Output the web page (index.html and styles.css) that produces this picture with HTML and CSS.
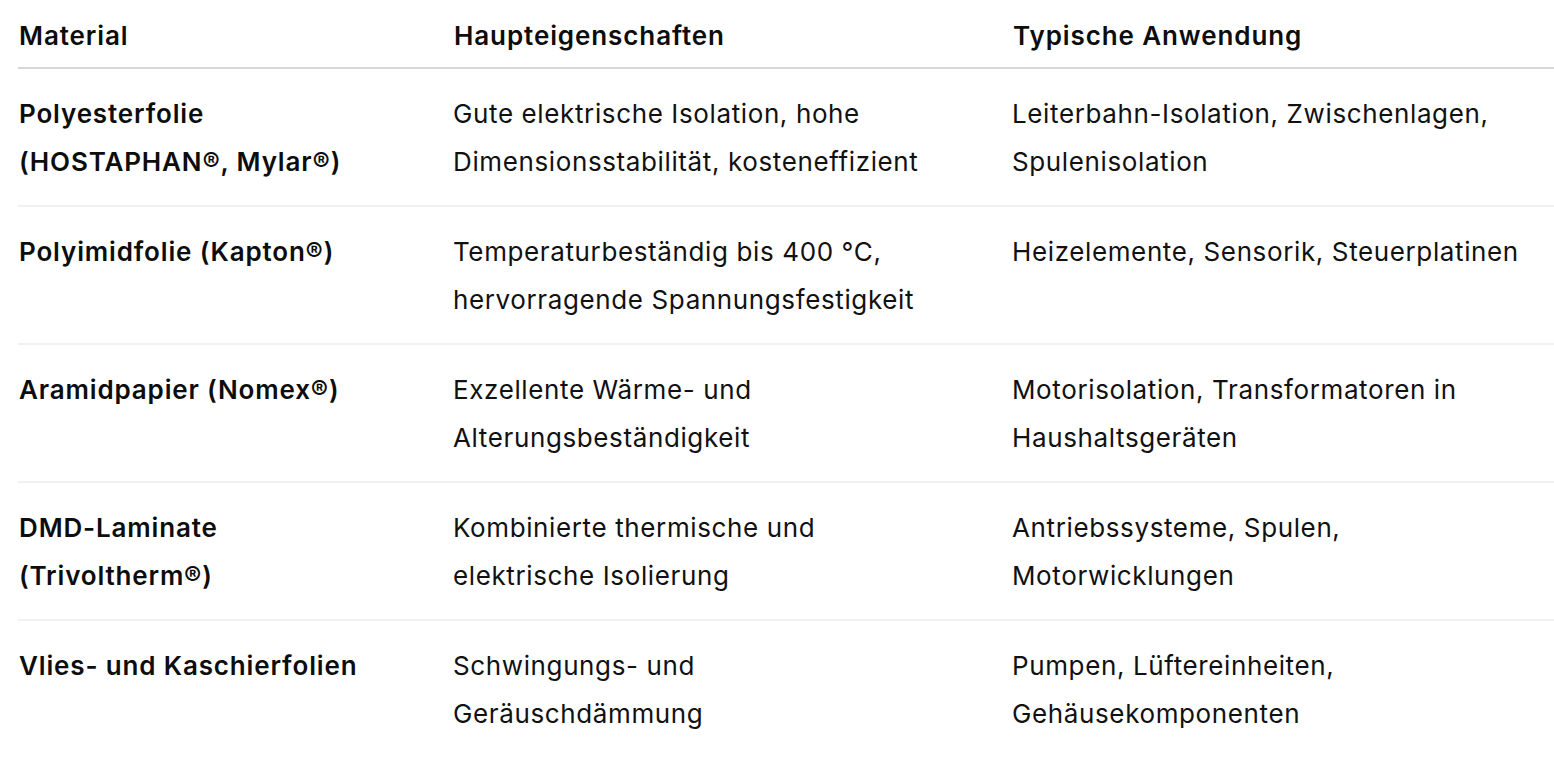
FILE: index.html
```html
<!DOCTYPE html>
<html lang="de">
<head>
<meta charset="utf-8">
<link rel="stylesheet" href="styles.css">
</head>
<body>
<table class="mat-table">
  <colgroup>
    <col class="c1">
    <col class="c2">
    <col class="c3">
  </colgroup>
  <thead>
    <tr>
      <th>Material</th>
      <th>Haupteigenschaften</th>
      <th>Typische Anwendung</th>
    </tr>
  </thead>
  <tbody>
    <tr>
      <td class="name">Polyesterfolie<br>(HOSTAPHAN®, Mylar®)</td>
      <td>Gute elektrische Isolation, hohe<br>Dimensionsstabilität, kosteneffizient</td>
      <td>Leiterbahn-Isolation, Zwischenlagen,<br>Spulenisolation</td>
    </tr>
    <tr>
      <td class="name">Polyimidfolie (Kapton®)</td>
      <td>Temperaturbeständig bis 400 °C,<br>hervorragende Spannungsfestigkeit</td>
      <td>Heizelemente, Sensorik, Steuerplatinen</td>
    </tr>
    <tr>
      <td class="name">Aramidpapier (Nomex®)</td>
      <td>Exzellente Wärme- und<br>Alterungsbeständigkeit</td>
      <td>Motorisolation, Transformatoren in<br>Haushaltsgeräten</td>
    </tr>
    <tr>
      <td class="name">DMD-Laminate<br>(Trivoltherm®)</td>
      <td>Kombinierte thermische und<br>elektrische Isolierung</td>
      <td>Antriebssysteme, Spulen,<br>Motorwicklungen</td>
    </tr>
    <tr>
      <td class="name">Vlies- und Kaschierfolien</td>
      <td>Schwingungs- und<br>Geräuschdämmung</td>
      <td>Pumpen, Lüftereinheiten,<br>Gehäusekomponenten</td>
    </tr>
  </tbody>
</table>
</body>
</html>
```

FILE: styles.css
```css
html, body {
  margin: 0;
  padding: 0;
  background: #ffffff;
}
body {
  padding: 0 0 0 18px;
  font-family: Inter, "Noto Sans", sans-serif;
  color: #111111;
}
.mat-table {
  width: 1536px;
  border-collapse: collapse;
  font-size: 26px;
  line-height: 48px;
  letter-spacing: 0.62px;
  table-layout: fixed;
}
.c1 { width: 435px; }
.c2 { width: 559px; }
.c3 { width: 542px; }
.mat-table th {
  text-align: left;
  font-weight: 600;
  letter-spacing: 0.9px;
  padding: 12px 0 7px 1px;
  border-bottom: 2px solid #d6d6d6;
  color: #0d0d0d;
}
.mat-table td {
  vertical-align: top;
  padding: 21px 0 19px 0;
  border-bottom: 2px solid #f1f1f1;
  font-weight: 400;
}
.mat-table tbody tr:last-child td {
  border-bottom: none;
}
.mat-table td.name {
  font-weight: 600;
  letter-spacing: 0.85px;
  padding-left: 1px;
  color: #0d0d0d;
}
```
